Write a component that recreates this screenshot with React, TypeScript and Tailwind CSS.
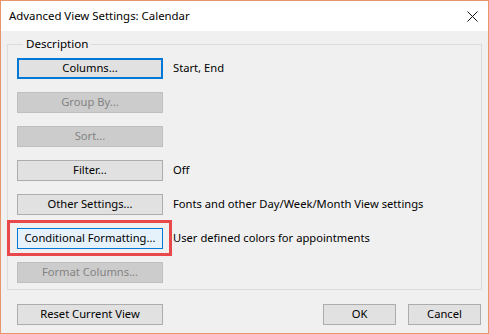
import React from "react";

type Row = {
  label: string;
  note?: string;
  disabled?: boolean;
  focused?: boolean;
  highlighted?: boolean;
};

const rows: Row[] = [
  { label: "Columns...", note: "Start, End", focused: true },
  { label: "Group By...", disabled: true },
  { label: "Sort...", disabled: true },
  { label: "Filter...", note: "Off" },
  { label: "Other Settings...", note: "Fonts and other Day/Week/Month View settings" },
  { label: "Conditional Formatting...", note: "User defined colors for appointments", highlighted: true },
  { label: "Format Columns...", disabled: true },
];

function DialogButton({ row }: { row: Row }) {
  if (row.disabled) {
    return (
      <div className="flex h-[21px] w-[146px] items-center justify-center border border-[#bfbfbf] bg-[#cccccc] text-[#838383]">
        {row.label}
      </div>
    );
  }
  if (row.focused) {
    return (
      <div className="flex h-[21px] w-[146px] items-center justify-center border-2 border-[#0078d7] bg-[#e1e1e1] text-black">
        {row.label}
      </div>
    );
  }
  if (row.highlighted) {
    return (
      <div className="flex h-[21px] w-[146px] items-center justify-center border border-[#0078d7] bg-[#e5f1fb] text-black">
        {row.label}
      </div>
    );
  }
  return (
    <div className="flex h-[21px] w-[146px] items-center justify-center border border-[#adadad] bg-[#e1e1e1] text-black">
      {row.label}
    </div>
  );
}

export default function App() {
  return (
    <div
      className="h-[334px] w-[489px] border border-[#e9946a] bg-[#f0f0f0] text-[11.2px] text-black"
      style={{ fontFamily: '"Noto Sans", "Open Sans", sans-serif' }}
    >
      {/* title bar */}
      <div className="flex h-[30px] items-center justify-between bg-white pl-[8px] pr-[10px]">
        <span className="text-[11.4px]">Advanced View Settings: Calendar</span>
        <svg width="11" height="11" viewBox="0 0 11 11">
          <path d="M0.5 0.5 L10.5 10.5 M10.5 0.5 L0.5 10.5" stroke="#111" strokeWidth="1" />
        </svg>
      </div>

      <div className="px-[6px] pt-[6px]">
        <fieldset className="h-[253px] border border-[#dcdcdc] pl-[9px] pt-[7px]">
          <legend className="ml-[6px] px-[3px] text-[11.6px] leading-[14px]">Description</legend>
          <div className="flex flex-col gap-[13px]">
            {rows.map((row) => (
              <div key={row.label} className="flex items-center gap-[10px]">
                <div className="relative">
                  {row.highlighted && (
                    <div className="absolute -bottom-[7px] -left-[10px] -right-[9px] -top-[8px] border-[3px] border-[#e8484a]" />
                  )}
                  <DialogButton row={row} />
                </div>
                {row.note && <span>{row.note}</span>}
              </div>
            ))}
          </div>
        </fieldset>

        <div className="mt-[14px] flex items-center pl-[10px]">
          <DialogButton row={{ label: "Reset Current View" }} />
          <div className="ml-auto flex gap-[12px] pr-[1px]">
            <div className="flex h-[21px] w-[73px] items-center justify-center border border-[#adadad] bg-[#e1e1e1]">OK</div>
            <div className="flex h-[21px] w-[73px] items-center justify-center border border-[#adadad] bg-[#e1e1e1]">Cancel</div>
          </div>
        </div>
      </div>
    </div>
  );
}
